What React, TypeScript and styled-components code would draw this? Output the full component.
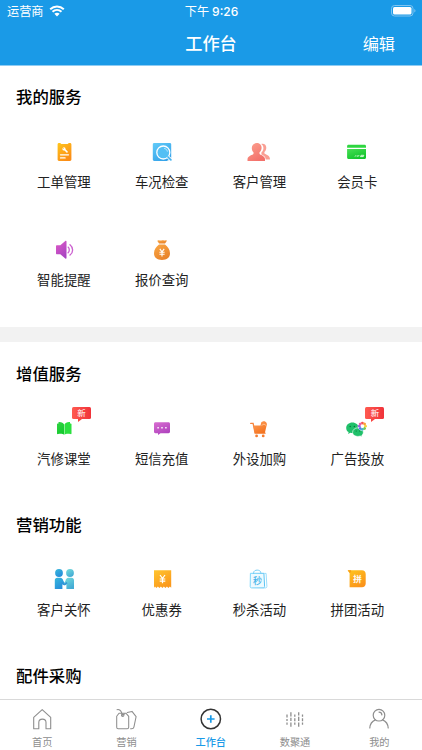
import React from "react";
import styled, { createGlobalStyle } from "styled-components";

const GlobalStyle = createGlobalStyle`
  * { box-sizing: border-box; }
  body {
    margin: 0;
    background: #fff;
    font-family: "Noto Sans CJK SC", sans-serif;
    overflow: hidden;
  }
  svg { display: block; flex: none; }
`;

const Screen = styled.div`
  width: 422px;
  height: 750px;
  display: flex;
  flex-direction: column;
  overflow: hidden;
  background: #fff;
`;

const Header = styled.header`
  flex: none;
  height: 66px;
  background: #1a9ae7;
  border-bottom: 1px solid #8fccf3;
  color: #fff;
`;

const StatusBar = styled.div`
  height: 21px;
  display: grid;
  grid-template-columns: 1fr auto 1fr;
  align-items: center;
  padding: 1px 6px 0 7px;
  font-size: 12.2px;
  line-height: 19px;
`;

const Carrier = styled.div`
  display: flex;
  align-items: center;
  gap: 5px;
`;

const Clock = styled.div`
  display: flex;
  gap: 3px;
  span { font: 500 12px/19px Inter, sans-serif; }
`;

const BatterySlot = styled.div`
  display: flex;
  justify-content: flex-end;
`;

const NavBar = styled.div`
  height: 44px;
  display: grid;
  grid-template-columns: 1fr auto 1fr;
  align-items: center;
  padding: 0 27px 1px;
`;

const NavTitle = styled.h1`
  grid-column: 2;
  margin: 0;
  font-size: 17.2px;
  font-weight: 500;
  line-height: 24px;
`;

const EditButton = styled.button`
  justify-self: end;
  padding: 0;
  border: 0;
  background: none;
  color: inherit;
  font: inherit;
  font-size: 16.2px;
  line-height: 24px;
`;

const Content = styled.main`
  flex: 1;
  min-height: 0;
  overflow: hidden;
`;

const Section = styled.section<{ $divided?: boolean }>`
  padding-bottom: ${(p) => (p.$divided ? "11px" : "0")};
  border-bottom: ${(p) => (p.$divided ? "15px solid #f2f2f2" : "0")};
`;

const SectionTitle = styled.h2<{ $raised?: boolean }>`
  margin: 0;
  height: 62px;
  padding-left: 16px;
  font-size: 16.4px;
  font-weight: 500;
  line-height: ${(p) => (p.$raised ? "60px" : "62px")};
  color: #000;
`;

const Grid = styled.div`
  display: grid;
  grid-template-columns: repeat(4, 97.8px);
  grid-auto-rows: 89.5px;
  row-gap: 8.5px;
  padding-left: 15px;
`;

const Item = styled.div`
  position: relative;
  display: flex;
  flex-direction: column;
  align-items: center;
  padding-top: 12px;
`;

const ItemLabel = styled.span<{ $raised?: boolean }>`
  margin-top: ${(p) => (p.$raised ? "7px" : "8px")};
  font-size: 13.4px;
  line-height: 20px;
  color: #222;
`;

const Badge = styled.span`
  position: absolute;
  left: 57px;
  top: 3px;
  width: 19px;
  height: 12px;
  border-radius: 1.5px;
  background: linear-gradient(90deg, #ff5a50, #f0333a);
  color: #fff;
  font-size: 8.5px;
  line-height: 11px;
  text-align: center;
  &::after {
    content: "";
    position: absolute;
    left: 6px;
    top: 12px;
    border-top: 3px solid #f9423f;
    border-right: 4px solid transparent;
  }
`;

const TabBar = styled.nav`
  flex: none;
  height: 51px;
  border-top: 1px solid #d9d9d9;
  display: grid;
  grid-template-columns: repeat(5, 84.3px);
  background: #fff;
`;

const Tab = styled.div<{ $active?: boolean }>`
  display: flex;
  flex-direction: column;
  align-items: center;
  padding-top: 7px;
  font-size: 10.2px;
  line-height: 14px;
  color: ${(p) => (p.$active ? "#1a9ae7" : "#8e8e8e")};
  font-weight: ${(p) => (p.$active ? 500 : 400)};
  span { margin-top: 4px; }
`;

function Icon({ children }: { children: React.ReactNode }) {
  return (
    <svg width="24" height="24" viewBox="0 0 24 24" fill="none">
      {children}
    </svg>
  );
}

function Gradient({ id, from, to, flat }: { id: string; from: string; to: string; flat?: boolean }) {
  return (
    <defs>
      <linearGradient id={id} x1="0" y1="0" x2={flat ? "1" : "0.6"} y2={flat ? "0" : "1"}>
        <stop stopColor={from} />
        <stop offset="1" stopColor={to} />
      </linearGradient>
    </defs>
  );
}

const WorkOrder = (
  <Icon>
    <Gradient id="order" from="#ffc61c" to="#fb8d17" />
    <path d="M7 3h1.4c.2.6.6.9 1.2.9h5.8c.6 0 1-.3 1.2-.9H18c.8 0 1.4.6 1.4 1.4v15.2c0 .8-.6 1.4-1.4 1.4H7c-.8 0-1.4-.6-1.4-1.4V4.4C5.6 3.600 6.200 3 7 3Z" fill="url(#order)" />
    <circle cx="12" cy="8.9" r="1.6" fill="#fff" />
    <path d="m12.6 9.5 2.400 2.400" stroke="#fff" strokeWidth="1.5" strokeLinecap="round" />
    <path d="m10.6 7.500 1.200 1.200" stroke="#fdae1c" strokeWidth=".8" />
    <path d="M8.500 14.800h8M8.500 17.900h4.600" stroke="#fff" strokeWidth="1.3" strokeLinecap="round" />
  </Icon>
);

const Inspect = (
  <Icon>
    <Gradient id="inspect" from="#62cbf8" to="#35a3ea" />
    <path d="M4.200 3h15.600c.8 0 1.400.6 1.400 1.400v15.200L19.800 21H4.200c-.8 0-1.400-.6-1.400-1.400V4.400C2.800 3.600 3.400 3 4.200 3Z" fill="url(#inspect)" />
    <path d="M17.500 20.200h4V22h-4z" fill="#fff" />
    <circle cx="13.3" cy="12.5" r="6.5" fill="#54bff4" stroke="#fff" strokeWidth="1.3" />
    <path d="m18.200 17.200 3 3" stroke="#fff" strokeWidth="3.200" />
    <path d="m18 17 2.900 2.900" stroke="#43b2ef" strokeWidth="1.700" strokeLinecap="round" />
    <path d="M14.600 8.500c1.500.4 2.400 1.300 2.700 2.700" stroke="#d9f3ff" strokeWidth=".8" strokeLinecap="round" />
  </Icon>
);

const Clients = (
  <Icon>
    <Gradient id="clients" from="#fca18f" to="#f3716b" />
    <path d="M14.200 4c2.900-.8 5.100 1 5.100 3.700 0 1.800-.8 3.300-1.900 4.200v1.400c.4 1.200 5.200 1.700 5.500 5.100v1.100h-4.200c-.2-2.900-2.100-4.200-4.300-5v-1.900c1.500-1.400 2.200-3.100 2-4.900-.1-1.600-.9-2.900-2.200-3.700Z" fill="#f99f94" />
    <path d="M9.700 3.100c2.800 0 4.900 2 4.900 4.700 0 1.800-.8 3.500-2.100 4.500v1.400c.5 1.400 5.300 1.700 5.500 5.300V21H.5v-2c.3-3.600 5.500-3.900 6-5.300v-1.500c-1.100-1-1.700-2.600-1.700-4.300 0-2.800 2.100-4.800 4.900-4.800Z" fill="url(#clients)" />
  </Icon>
);

const MemberCard = (
  <Icon>
    <Gradient id="card" from="#48df55" to="#12c52c" />
    <path d="M3.600 4.800h16c.8 0 1.400.6 1.400 1.400v1.500H2.100V6.200c0-.8.6-1.400 1.500-1.400Z" fill="#2ed640" />
    <path d="M2.100 8.900H21v8.600c0 .8-.6 1.500-1.400 1.500h-16c-.9 0-1.500-.7-1.500-1.500V8.900Z" fill="url(#card)" />
    <path d="m10 16.600 1-1.300m1.100 1.300.9-1.300m0 1.300 1-1.300m1.400 1.300.7-1.300h2.700l-.5 1.300h-2.800" stroke="#e9ffe9" strokeWidth=".9" />
  </Icon>
);

const Speaker = (
  <Icon>
    <Gradient id="speaker" from="#e05ac7" to="#a944c2" />
    <path d="M4 8.200c0-.6.4-1 1-1h3.300l5-4.100c.6-.5 1.200-.2 1.200.5v16.300c0 .7-.6 1-1.200.5l-5-4.100H5c-.6 0-1-.4-1-1V8.200Z" fill="url(#speaker)" />
    <path d="M16.100 9.100c1.600 1.400 1.600 4.200 0 5.600M18 6.700c3.500 2.800 3.500 7.600 0 10.400" stroke="#cb60cf" strokeWidth="1.300" strokeLinecap="round" />
  </Icon>
);

const MoneyBag = (
  <Icon>
    <Gradient id="money" from="#fba743" to="#e8832b" />
    <path d="M8 2.500c1.300-.8 2.200.5 3.500 0 1.500-.7 2 .5 4.400-.3.700-.2 1 .5.700 1L15 5.500H9.100L7.500 3.300c-.3-.4 0-.7.5-.8Z" fill="url(#money)" />
    <path d="M9 6.600h6c2.700 2.200 5 5 5 8.700 0 4.200-2.800 6.600-8 6.600s-8-2.400-8-6.600c0-3.700 2.300-6.500 5-8.700Z" fill="url(#money)" />
    <path d="m9.800 10.800 2.200 3 2.200-3M12 13.800v4.700M9.400 14.200h5.200m-5.200 2.100h5.200" stroke="#fff" strokeWidth="1.100" />
  </Icon>
);

const Book = (
  <Icon>
    <Gradient id="book" from="#32d445" to="#13c92d" />
    <path d="M5 8.100c0-.5.300-.7.800-.7h.7V6.100c2.700-.3 4.800.7 5.600 2.500v10.200c-1.400-1.200-3.800-1.300-6-.7-.7.200-1.100 0-1.100-.6V8.100Z" fill="url(#book)" />
    <path d="M19.500 8.100c0-.5-.3-.7-.8-.7H18V6.100c-2.700-.3-4.700.7-5.500 2.500v10.200c1.300-1.200 3.700-1.300 5.900-.7.700.2 1.100 0 1.100-.6V8.100Z" fill="#2be03f" />
  </Icon>
);

const Message = (
  <Icon>
    <Gradient id="message" from="#d96ed0" to="#af43be" />
    <path d="M5.400 6.200h13.100c.9 0 1.500.6 1.500 1.500v8.100c0 .8-.6 1.400-1.500 1.400h-8L8 19v-1.800H5.400c-.8 0-1.400-.6-1.400-1.400V7.700c0-.9.600-1.500 1.400-1.500Z" fill="url(#message)" />
    <path d="M7.400 11.700h1.400m2.500 0h1.400m2.500 0h1.400" stroke="#fff" strokeWidth="1.400" />
  </Icon>
);

const Cart = (
  <Icon>
    <Gradient id="cart" from="#ffa05b" to="#f47420" />
    <path d="M3.700 7.400h2.400l2 9.800h10" stroke="#f5833d" strokeWidth="1.300" strokeLinecap="round" />
    <path d="M6.300 9.600h7.200l.6-2.800c.7-1.400 3-1.900 4.300-1.100 1.300.8 1.800 2.400 1.200 3.900l-1.800 7.600H7.800L6.300 9.600Z" fill="url(#cart)" />
    <path d="m14.500 9.400 2.500-1.300 2 1.300" stroke="#ffd4ad" strokeWidth=".7" />
    <circle cx="9.600" cy="19.900" r="1.400" fill="#f47d31" />
    <circle cx="16.200" cy="19.900" r="1.400" fill="#f47d31" />
  </Icon>
);

const petals = ["#f6544c", "#fa9f35", "#f7d23c", "#79c951", "#42b9c7", "#4a83ed", "#9b61dc", "#ed60a4"];

const AdChat = (
  <Icon>
    <path d="M7.400 6.600c3.500 0 6.200 2.300 6.200 5.300 0 2.900-2.700 5.200-6.200 5.200-.8 0-1.400-.1-2-.3l-2.300 1.300.5-2C2 15.200 1.200 13.700 1.200 11.900c0-3 2.700-5.300 6.200-5.300Z" fill="#20c06a" />
    <path d="M13 11.800c3 0 5.300 2 5.300 4.500 0 1.300-.6 2.400-1.600 3.200l.4 1.500-1.800-1c-3.700 1.200-7.700-.5-7.700-3.700 0-2.500 2.400-4.500 5.400-4.500Z" fill="#20c06a" stroke="#fff" strokeWidth=".6" />
    <g fill="#08733a">
      <circle cx="5.200" cy="10.400" r=".75" />
      <circle cx="9.400" cy="10.400" r=".75" />
      <circle cx="11.200" cy="15" r=".6" />
      <circle cx="14.800" cy="15" r=".6" />
    </g>
    <circle cx="17.400" cy="10.200" r="4.600" fill="#fff" />
    {petals.map((color, i) => (
      <circle key={color} cx="17.400" cy="7.100" r="1.400" fill={color} transform={`rotate(${i * 45} 17.4 10.2)`} />
    ))}
  </Icon>
);

const Care = (
  <Icon>
    <Gradient id="careA" from="#38b8dc" to="#268edb" />
    <Gradient id="careB" from="#77dedb" to="#43abd5" />
    <circle cx="7" cy="6" r="3.900" fill="url(#careA)" />
    <circle cx="18" cy="6" r="3.900" fill="url(#careB)" />
    <path d="M5.300 10.800h3c1.700 0 2.500 1.300 3.100 3.100l1.700 2.700-1.300 1.600-1.400-.9v4.600H2.800v-8.600c0-1.500 1-2.500 2.500-2.500Z" fill="url(#careA)" />
    <path d="M19.400 10.800h-3c-1.700 0-2.500 1.300-3 3.100l-1.500 2.700 1.100 1.600 1.400-.9v4.600H22v-8.600c0-1.500-1-2.500-2.600-2.500Z" fill="url(#careB)" />
    <path d="m9.700 15.500 3 2.100 2.300-1.900" stroke="#3294d8" strokeWidth="1.500" />
  </Icon>
);

const Coupon = (
  <Icon>
    <Gradient id="coupon" from="#ffc52f" to="#fb981b" />
    <path d="M4 3.300h17.200v17.500l-1.300-1.200-1.500 1.400-1.500-1.400-1.500 1.400-1.500-1.400-1.500 1.400-1.500-1.400-1.500 1.400-1.500-1.400-1.500 1.400-1.400-1.400L4 20.800V3.300Z" fill="url(#coupon)" />
    <path d="m10 8 2.500 3.500L15 8m-2.500 3.500v4.700M9.700 12h5.600m-5.600 2.200h5.600" stroke="#fff" strokeWidth="1.200" />
  </Icon>
);

const GlyphText = styled.text`
  font-family: "Noto Sans CJK SC", sans-serif;
  font-weight: 500;
`;

const FlashBag = (
  <Icon>
    <Gradient id="flash" from="#7fd6fa" to="#5bc3f2" flat />
    <path d="M3.400 6.300h13.500l.7 13.200c0 .8-.5 1.400-1.300 1.400H4.500c-.8 0-1.400-.6-1.300-1.400l.2-13.200Z" fill="#eefaff" stroke="url(#flash)" strokeWidth="1" />
    <path d="M17.200 6.400h1.900l.8 13c0 .9-.5 1.500-1.300 1.500h-2.200" stroke="#90dafa" strokeWidth=".9" />
    <path d="M6.600 7V5.800c0-3.600 7.200-3.600 7.200 0V7" stroke="#74cef7" strokeWidth="1" />
    <GlyphText x="10.500" y="17" textAnchor="middle" fontSize="9" fill="#45b2e8">秒</GlyphText>
  </Icon>
);

const GroupBuy = (
  <Icon>
    <Gradient id="group" from="#ffc61f" to="#fb941a" />
    <path d="M2.700 3.300H17c2.200 0 3.700 1.500 3.700 3.700v9.600c0 2.200-1.500 3.700-3.700 3.700H4.600V6.200L2.700 3.300Z" fill="url(#group)" />
    <path d="M2.700 3.300h3.400v2.200H4.300L2.700 3.300Z" fill="#f99e18" />
    <GlyphText x="12.400" y="15" textAnchor="middle" fontSize="8.500" fill="#fff" stroke="#fff" strokeWidth=".2">拼</GlyphText>
  </Icon>
);

const HomeIcon = (
  <Icon>
    <path d="M3.700 10.300 12.200 2.600l8.500 7.700v11.400H16v-6.200c0-4.500-7.200-4.500-7.200 0v6.200H3.700V10.300Z" stroke="#8e8e8e" strokeWidth="1.100" strokeLinejoin="round" />
  </Icon>
);

const TagsIcon = (
  <Icon>
    <g stroke="#8e8e8e" strokeWidth="1.050" strokeLinecap="round" strokeLinejoin="round">
      <path d="m5 6.300-2.300 3v10.900c0 .9.600 1.500 1.500 1.500h9c.9 0 1.500-.6 1.500-1.500V9.300l-2.600-3H5Z" />
      <path d="m13.200 5.400 4.800-1 4.100 5.200-2.200 10.500c-.2 1-1.300 1.600-2.300 1.600h-1" />
      <circle cx="8.700" cy="8.300" r="1.200" />
      <path d="M8.500 8.200C7.500 6.600 7.900 4.500 6 3.200c-1-.7-2-.7-3-.5m5.900 5.100 2-1" />
    </g>
  </Icon>
);

const WorkIcon = (
  <Icon>
    <circle cx="11.800" cy="12" r="9.700" stroke="#333" strokeWidth="1.500" />
    <path d="M8 12h7.600m-3.800-3.800v7.600" stroke="#1a9ae7" strokeWidth="1.700" />
  </Icon>
);

const DataIcon = (
  <Icon>
    <path d="M4 7.600v3m0 1.500v2m0 1.400v2.200M7.900 5.300v4.200m0 1.200v3.400m0 1.400v4.200M11.800 7.600v2.200m0 1.400v3m0 1.400v2.100M15.700 5.300v3.200m0 1.300v4.200m0 1.400v4.300M19.500 7.600v2.200m0 1.400v3m0 1.400v2.100" stroke="#8e8e8e" strokeWidth="1.300" />
  </Icon>
);

const PersonIcon = (
  <Icon>
    <circle cx="12" cy="8.200" r="5.800" stroke="#8e8e8e" strokeWidth="1.200" />
    <path d="M2.800 21c.2-3.600 2.300-6.700 5.600-8.100m7.200 0c3.300 1.400 5.400 4.500 5.600 8.100M12 5.100c1.600 0 2.800 1.200 2.900 2.800" stroke="#8e8e8e" strokeWidth="1.200" strokeLinecap="round" />
  </Icon>
);

type Entry = { label: string; icon: React.ReactNode; isNew?: boolean };

const sections: { title: string; divided?: boolean; items: Entry[] }[] = [
  {
    title: "我的服务",
    divided: true,
    items: [
      { label: "工单管理", icon: WorkOrder },
      { label: "车况检查", icon: Inspect },
      { label: "客户管理", icon: Clients },
      { label: "会员卡", icon: MemberCard },
      { label: "智能提醒", icon: Speaker },
      { label: "报价查询", icon: MoneyBag },
    ],
  },
  {
    title: "增值服务",
    items: [
      { label: "汽修课堂", icon: Book, isNew: true },
      { label: "短信充值", icon: Message },
      { label: "外设加购", icon: Cart },
      { label: "广告投放", icon: AdChat, isNew: true },
    ],
  },
  {
    title: "营销功能",
    items: [
      { label: "客户关怀", icon: Care },
      { label: "优惠券", icon: Coupon },
      { label: "秒杀活动", icon: FlashBag },
      { label: "拼团活动", icon: GroupBuy },
    ],
  },
  { title: "配件采购", items: [] },
];

const tabs = [
  { label: "首页", icon: HomeIcon },
  { label: "营销", icon: TagsIcon },
  { label: "工作台", icon: WorkIcon, active: true },
  { label: "数聚通", icon: DataIcon },
  { label: "我的", icon: PersonIcon },
];

export default function App() {
  return (
    <>
      <GlobalStyle />
      <Screen>
        <Header>
          <StatusBar>
            <Carrier>
              运营商
              <svg width="16" height="12" viewBox="0 0 16 12">
                <path d="M1.200 4.200c3.900-3.700 9.700-3.700 13.600 0M3.500 6.800c2.600-2.400 6.400-2.400 9 0" fill="none" stroke="#fff" strokeWidth="2" />
                <path d="M5.400 8.800c1.500-1.300 3.700-1.300 5.200 0L8 11.500 5.400 8.800Z" fill="#fff" />
              </svg>
            </Carrier>
            <Clock>下午<span>9:26</span></Clock>
            <BatterySlot>
              <svg width="25" height="12" viewBox="0 0 25 12">
                <rect x=".5" y=".5" width="21.500" height="10.500" rx="3" fill="none" stroke="#7fc4f1" />
                <rect x="2" y="2" width="18.500" height="7.500" rx="1.500" fill="#fff" />
                <path d="M23.300 4c1.600.7 1.600 2.800 0 3.500V4Z" fill="#7fc4f1" />
              </svg>
            </BatterySlot>
          </StatusBar>
          <NavBar>
            <NavTitle>工作台</NavTitle>
            <EditButton>编辑</EditButton>
          </NavBar>
        </Header>
        <Content>
          {sections.map((section) => (
            <Section key={section.title} $divided={section.divided}>
              <SectionTitle $raised={section.divided || section.items.length === 0}>{section.title}</SectionTitle>
              <Grid>
                {section.items.map((item) => (
                  <Item key={item.label}>
                    {item.icon}
                    <ItemLabel $raised={section.divided}>{item.label}</ItemLabel>
                    {item.isNew && <Badge>新</Badge>}
                  </Item>
                ))}
              </Grid>
            </Section>
          ))}
        </Content>
        <TabBar>
          {tabs.map((tab) => (
            <Tab key={tab.label} $active={tab.active}>
              {tab.icon}
              <span>{tab.label}</span>
            </Tab>
          ))}
        </TabBar>
      </Screen>
    </>
  );
}
